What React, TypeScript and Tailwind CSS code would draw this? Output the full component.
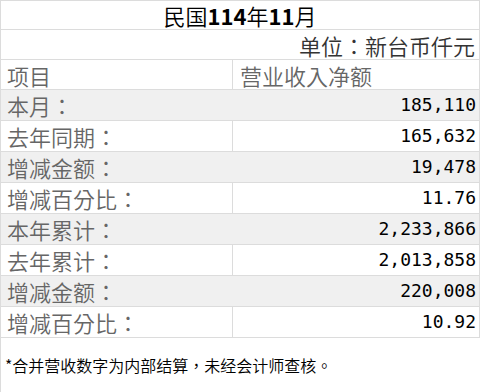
import React from "react";

// ─── Data ────────────────────────────────────────────────────────────────────

const ROWS = [
  { label: "本月：", value: "185,110", shaded: true },
  { label: "去年同期：", value: "165,632", shaded: false },
  { label: "增减金额：", value: "19,478", shaded: true },
  { label: "增减百分比：", value: "11.76", shaded: false },
  { label: "本年累计：", value: "2,233,866", shaded: true },
  { label: "去年累计：", value: "2,013,858", shaded: false },
  { label: "增减金额：", value: "220,008", shaded: true },
  { label: "增减百分比：", value: "10.92", shaded: false },
];

const CJK = "font-['Noto_Sans_CJK_TC','Noto_Sans_CJK_SC',sans-serif]";
const MONO = "font-['DejaVu_Sans_Mono','Liberation_Mono',monospace]";

// ─── Component ───────────────────────────────────────────────────────────────

export default function App() {
  return (
    <div className={`w-[482px] h-[392px] bg-white ${CJK}`}>
      <div className="w-[480px] border-x border-[#dcdcdc]">
        {/* Title */}
        <div className="h-[30px] border-y border-[#dcdcdc] flex items-center justify-center text-[22px] leading-none font-[350] text-black">
          民国<span className="font-semibold">114</span>年<span className="font-semibold">11</span>月
        </div>

        {/* Unit */}
        <div className="h-[30px] border-b border-[#dcdcdc] flex items-center justify-end pr-[4px] text-[22px] leading-none font-[350] text-[#333]">
          单位：新台币仟元
        </div>

        {/* Header */}
        <div className="grid grid-cols-[232px_1fr] h-[30px] border-b border-[#dcdcdc] text-[22px] leading-none font-[350] text-[#666]">
          <div className="flex items-center pl-[6px] border-r border-[#dcdcdc]">项目</div>
          <div className="flex items-center pl-[7px]">营业收入净额</div>
        </div>

        {/* Data rows */}
        {ROWS.map((row, i) => (
          <div
            key={i}
            className={`grid grid-cols-[232px_1fr] h-[31px] border-b border-[#dcdcdc] ${
              row.shaded ? "bg-[#f0f0f0]" : "bg-white"
            }`}
          >
            <div
              className={`flex items-center pl-[6px] border-r text-[22px] leading-none font-[350] text-[#666] ${
                row.shaded ? "border-[#f0f0f0]" : "border-[#dcdcdc]"
              }`}
            >
              {row.label}
            </div>
            <div className={`flex items-center justify-end pr-[3px] text-[18px] leading-none text-black ${MONO}`}>
              {row.value}
            </div>
          </div>
        ))}
      </div>

      {/* Footnote */}
      <div className="h-[54px] border-l border-[#dcdcdc] flex items-center pl-[4px] text-[16px] leading-none font-[350] text-black">
        *合并营收数字为内部结算，未经会计师查核。
      </div>
    </div>
  );
}
